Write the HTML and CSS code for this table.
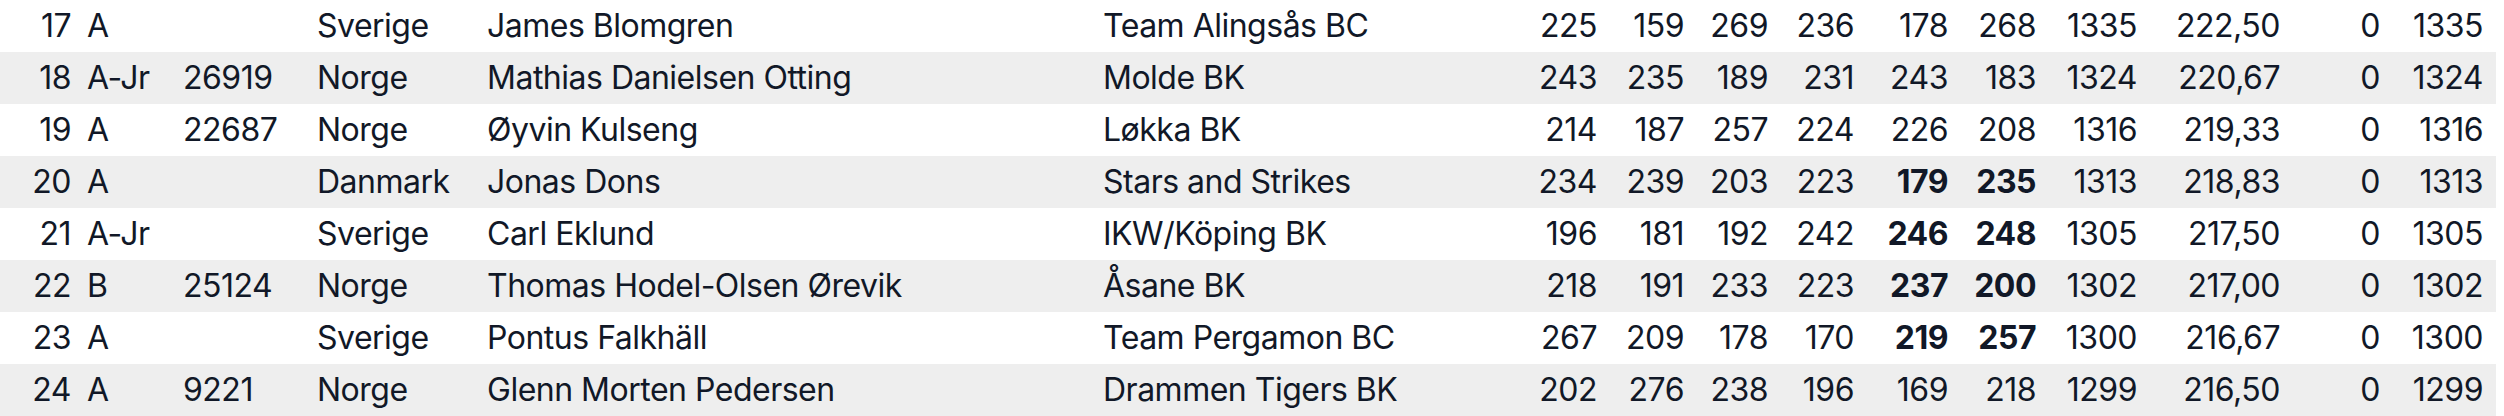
FILE: index.html
```html
<!DOCTYPE html>
<html lang="no">
<head>
<meta charset="utf-8">
<title>Resultater</title>
<link rel="stylesheet" href="styles.css">
</head>
<body>
<table class="results">
  <colgroup>
    <col class="c-rank"><col class="c-class"><col class="c-id"><col class="c-country"><col class="c-name"><col class="c-club">
    <col class="c-s1"><col class="c-s2"><col class="c-s3"><col class="c-s4"><col class="c-s5"><col class="c-s6">
    <col class="c-total"><col class="c-avg"><col class="c-hcp"><col class="c-final">
  </colgroup>
  <tbody>
    <tr><td class="num">17</td><td>A</td><td></td><td>Sverige</td><td>James Blomgren</td><td>Team Alingsås BC</td><td class="num">225</td><td class="num">159</td><td class="num">269</td><td class="num">236</td><td class="num">178</td><td class="num">268</td><td class="num">1335</td><td class="num">222,50</td><td class="num">0</td><td class="num last">1335</td></tr>
    <tr><td class="num">18</td><td>A-Jr</td><td>26919</td><td>Norge</td><td>Mathias Danielsen Otting</td><td>Molde BK</td><td class="num">243</td><td class="num">235</td><td class="num">189</td><td class="num">231</td><td class="num">243</td><td class="num">183</td><td class="num">1324</td><td class="num">220,67</td><td class="num">0</td><td class="num last">1324</td></tr>
    <tr><td class="num">19</td><td>A</td><td>22687</td><td>Norge</td><td>Øyvin Kulseng</td><td>Løkka BK</td><td class="num">214</td><td class="num">187</td><td class="num">257</td><td class="num">224</td><td class="num">226</td><td class="num">208</td><td class="num">1316</td><td class="num">219,33</td><td class="num">0</td><td class="num last">1316</td></tr>
    <tr><td class="num">20</td><td>A</td><td></td><td>Danmark</td><td>Jonas Dons</td><td>Stars and Strikes</td><td class="num">234</td><td class="num">239</td><td class="num">203</td><td class="num">223</td><td class="num best">179</td><td class="num best">235</td><td class="num">1313</td><td class="num">218,83</td><td class="num">0</td><td class="num last">1313</td></tr>
    <tr><td class="num">21</td><td>A-Jr</td><td></td><td>Sverige</td><td>Carl Eklund</td><td>IKW/Köping BK</td><td class="num">196</td><td class="num">181</td><td class="num">192</td><td class="num">242</td><td class="num best">246</td><td class="num best">248</td><td class="num">1305</td><td class="num">217,50</td><td class="num">0</td><td class="num last">1305</td></tr>
    <tr><td class="num">22</td><td>B</td><td>25124</td><td>Norge</td><td>Thomas Hodel-Olsen Ørevik</td><td>Åsane BK</td><td class="num">218</td><td class="num">191</td><td class="num">233</td><td class="num">223</td><td class="num best">237</td><td class="num best">200</td><td class="num">1302</td><td class="num">217,00</td><td class="num">0</td><td class="num last">1302</td></tr>
    <tr><td class="num">23</td><td>A</td><td></td><td>Sverige</td><td>Pontus Falkhäll</td><td>Team Pergamon BC</td><td class="num">267</td><td class="num">209</td><td class="num">178</td><td class="num">170</td><td class="num best">219</td><td class="num best">257</td><td class="num">1300</td><td class="num">216,67</td><td class="num">0</td><td class="num last">1300</td></tr>
    <tr><td class="num">24</td><td>A</td><td>9221</td><td>Norge</td><td>Glenn Morten Pedersen</td><td>Drammen Tigers BK</td><td class="num">202</td><td class="num">276</td><td class="num">238</td><td class="num">196</td><td class="num">169</td><td class="num">218</td><td class="num">1299</td><td class="num">216,50</td><td class="num">0</td><td class="num last">1299</td></tr>
  </tbody>
</table>
</body>
</html>
```
FILE: styles.css
```css
html, body {
  margin: 0;
  padding: 0;
  background: #ffffff;
}

.results {
  width: 2496px;
  table-layout: fixed;
  border-collapse: collapse;
  font-family: Inter, "Noto Sans", "Liberation Sans", sans-serif;
  font-size: 32px;
  letter-spacing: -0.5px;
  color: #111827;
}

.results td {
  height: 52px;
  padding: 0 8px;
  white-space: nowrap;
  text-align: left;
  vertical-align: middle;
  line-height: 1;
}

.results tr:nth-child(even) td {
  background: #eeeeee;
}

.results td.num {
  text-align: right;
}

.results td.last {
  padding-right: 13px;
}

.results td.best {
  font-weight: 700;
}

.c-rank { width: 79px; }
.c-class { width: 96px; }
.c-id { width: 134px; }
.c-country { width: 170px; }
.c-name { width: 616px; }
.c-club { width: 425px; }
.c-s1 { width: 85px; }
.c-s2 { width: 87px; }
.c-s3 { width: 84px; }
.c-s4 { width: 86px; }
.c-s5 { width: 94px; }
.c-s6 { width: 88px; }
.c-total { width: 101px; }
.c-avg { width: 143px; }
.c-hcp { width: 100px; }
.c-final { width: 108px; }
```
